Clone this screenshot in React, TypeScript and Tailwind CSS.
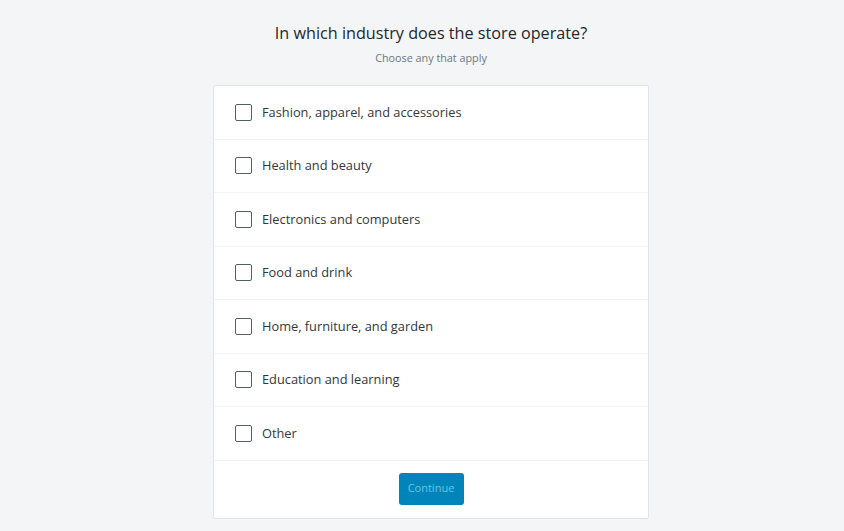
const industries = [
  "Fashion, apparel, and accessories",
  "Health and beauty",
  "Electronics and computers",
  "Food and drink",
  "Home, furniture, and garden",
  "Education and learning",
  "Other",
];

export default function App() {
  return (
    <main className="min-h-[531px] bg-[#f3f5f6] flex flex-col items-center pt-[21px] pl-[18px] font-['Open_Sans',sans-serif]">
      <h1 className="text-[16.2px] leading-[24px] text-[#23282d]">In which industry does the store operate?</h1>
      <p className="mt-[5px] text-[10.8px] leading-[16px] text-[#6c7781]">Choose any that apply</p>

      <div className="mt-[19px] w-[436px] bg-white border border-[#e2e4e7] rounded-[2px]">
        {industries.map((label) => (
          <label
            key={label}
            className="flex items-center h-[53.5px] pl-[21px] border-b border-[#f3f4f5] cursor-pointer"
          >
            <span className="w-[17px] h-[17px] border border-[#555d66] rounded-[2px] bg-white" />
            <span className="ml-[10px] text-[12.8px] text-[#32373c]">{label}</span>
          </label>
        ))}
        <div className="flex justify-center pt-[12px] pb-[13px]">
          <button
            type="button"
            className="h-[32px] w-[65px] rounded-[3px] bg-[#0085ba] text-[#66c6e4] text-[11px]"
          >
            Continue
          </button>
        </div>
      </div>
    </main>
  );
}
